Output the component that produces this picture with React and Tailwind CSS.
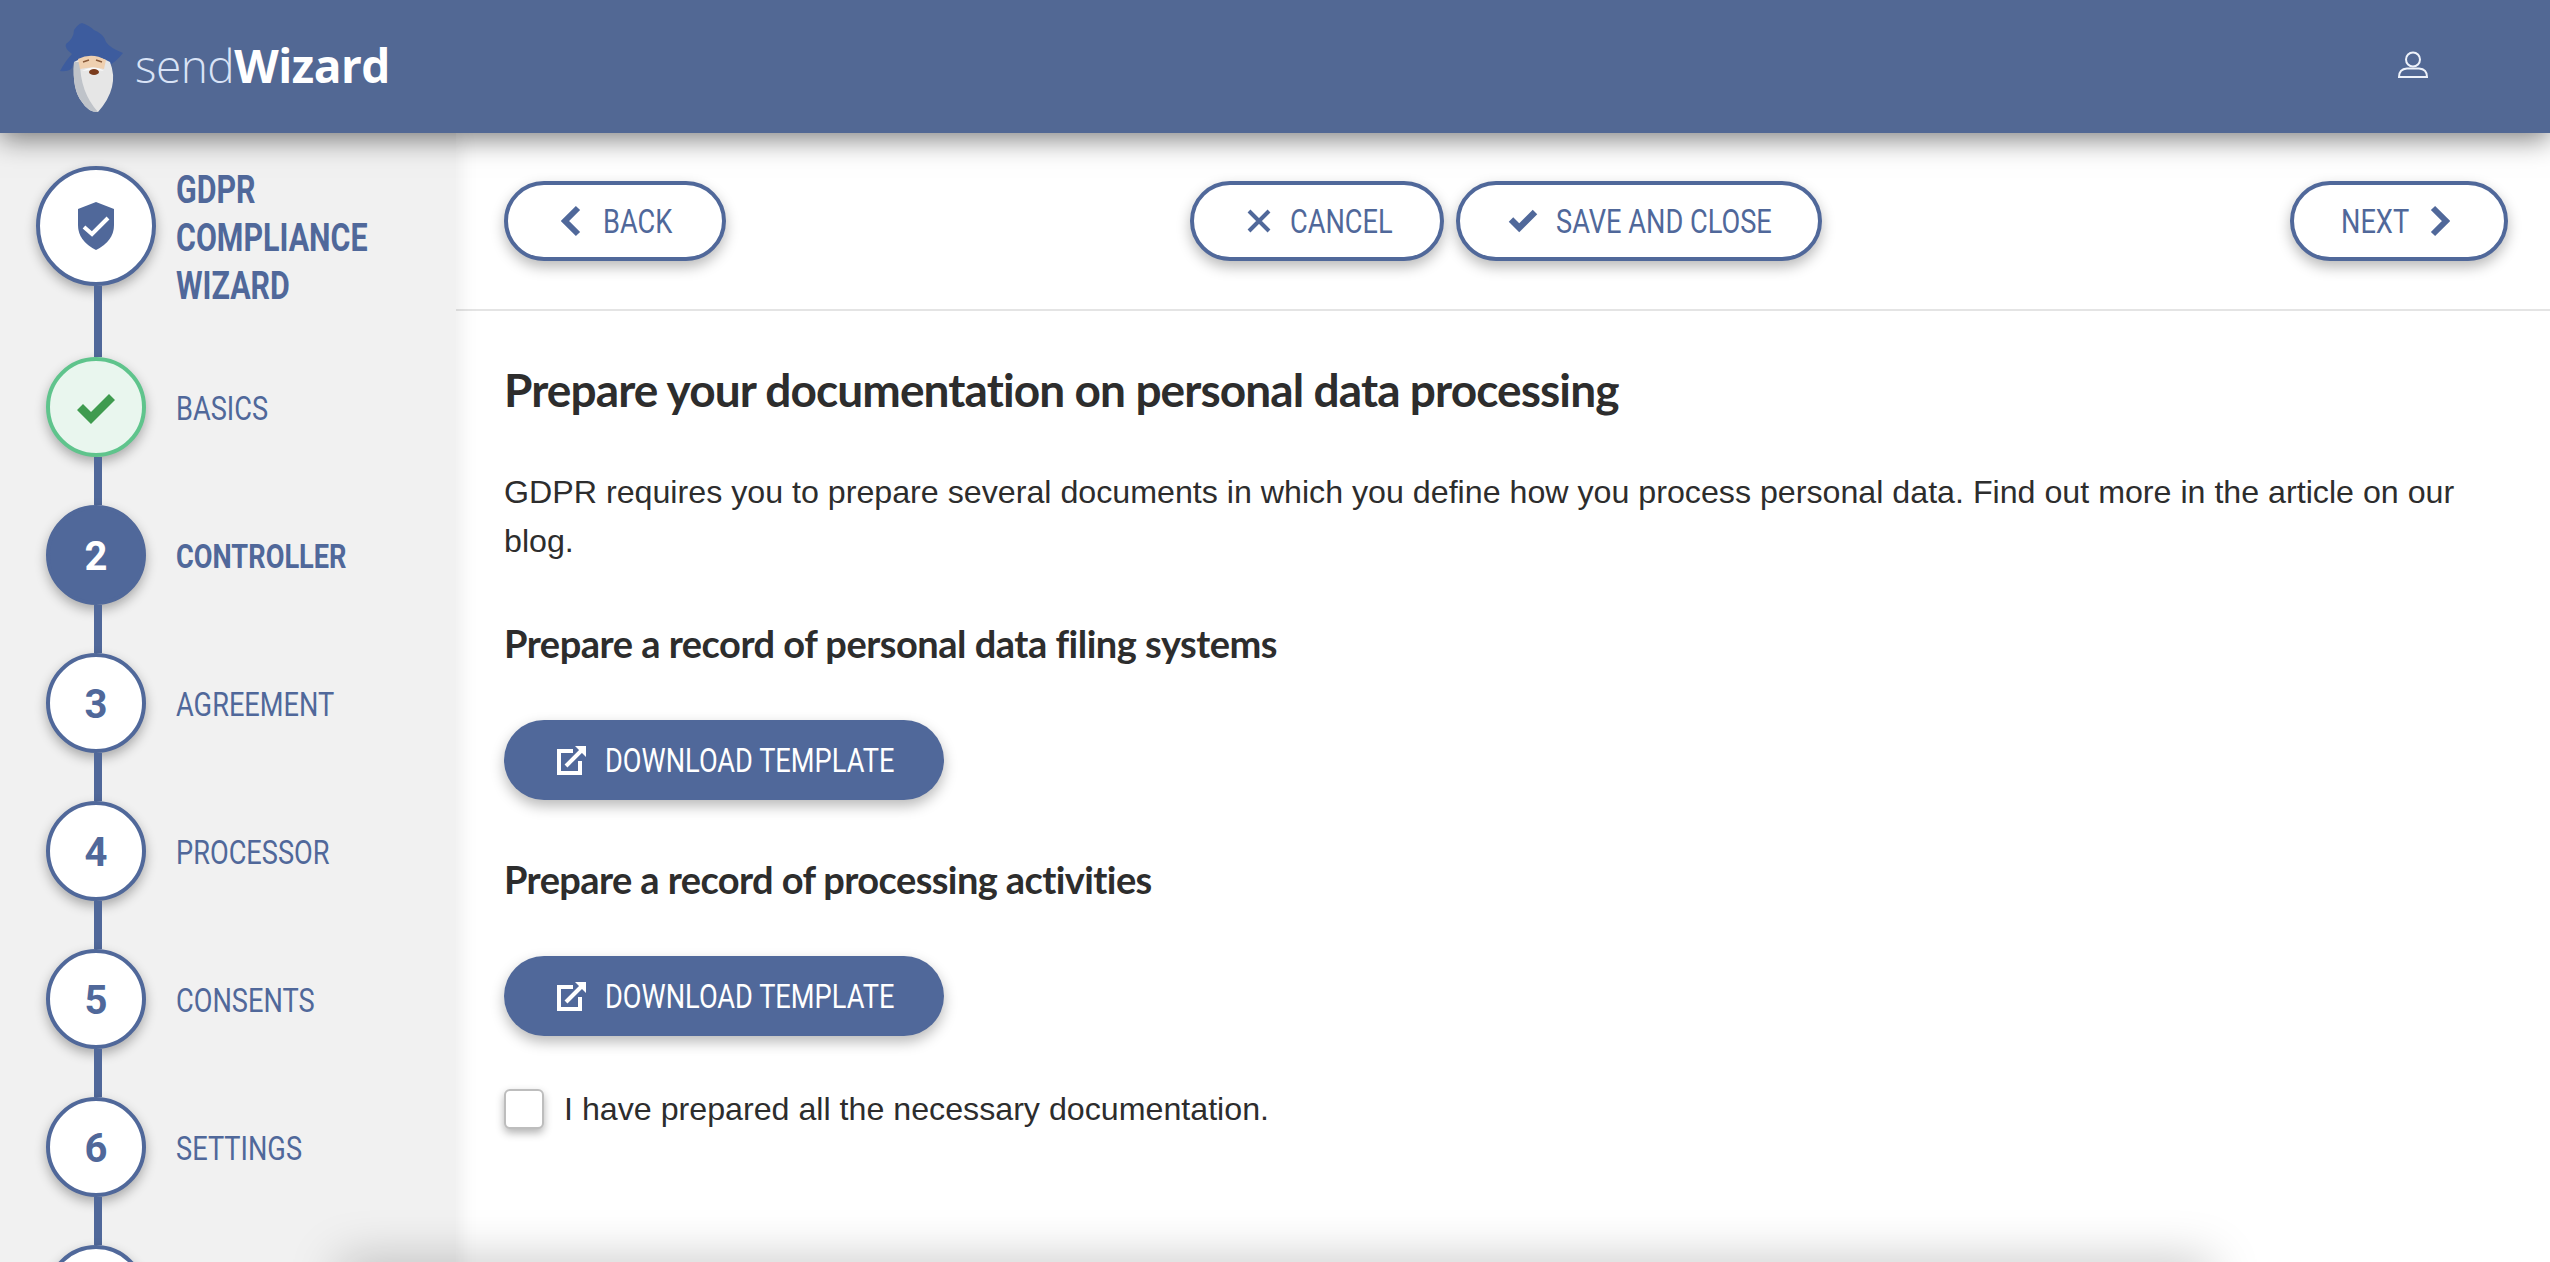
import React from "react";

const steps = [
  { label: "BASICS", state: "done" },
  { label: "CONTROLLER", num: 2, state: "active" },
  { label: "AGREEMENT", num: 3 },
  { label: "PROCESSOR", num: 4 },
  { label: "CONSENTS", num: 5 },
  { label: "SETTINGS", num: 6 },
  { label: "" },
];

const din = "font-['Roboto',sans-serif]";

const Wizard = () => (
  <svg width="63" height="90" viewBox="0 0 63 90" className="shrink-0">
    <path
      d="M22 1 Q30 4 34 8 Q44 12 46 20 Q50 26 63 31 Q56 40 48 44 Q30 34 14 40 L12 46 Q8 50 0 49 Q6 38 12 32 Q4 26 6 22 Q14 16 14 8 Q18 2 22 1Z"
      fill="#3d5c9e"
    />
    <path d="M14 40 Q32 30 50 40 Q60 65 38 90 Q28 90 22 80 Q12 68 14 40Z" fill="#e6e6e6" />
    <path d="M14 40 Q12 68 22 80 Q28 90 38 90 Q20 70 20 40Z" fill="#bfc3c9" />
    <path d="M18 37 Q32 30 46 38 L44 47 Q32 44 20 47Z" fill="#efd0b0" />
    <path d="M23 40 L29 38 M36 38 L42 40" stroke="#8a5a3a" strokeWidth="1.5" fill="none" />
    <path d="M22 49 Q34 42 44 49 Q34 47 22 49Z" fill="#fafafa" />
    <ellipse cx="34" cy="50" rx="5" ry="3" fill="#7a3b1c" />
  </svg>
);

const Shield = () => (
  <svg width="38" height="50" viewBox="0 0 38 50">
    <path d="M19 1 L37 8 V24 Q37 40 19 49 Q1 40 1 24 V8Z" fill="#50689a" />
    <path d="M7 26 L15 33 L31 17" fill="none" stroke="#fff" strokeWidth="4" />
  </svg>
);

const Check = ({ color, size = 40 }) => (
  <svg width={size} height={size * 0.8} viewBox="0 0 40 32" className="shrink-0">
    <path d="M1 17 L7 11 L15 19 L33 1 L39 7 L15 31Z" fill={color} />
  </svg>
);

const ChevronLeft = () => (
  <svg width="20" height="32" viewBox="0 0 20 32" className="shrink-0">
    <path d="M17 3 L4 16 L17 29" fill="none" stroke="#50689a" strokeWidth="6" />
  </svg>
);

const ChevronRight = () => (
  <svg width="20" height="32" viewBox="0 0 20 32" className="shrink-0">
    <path d="M3 3 L16 16 L3 29" fill="none" stroke="#50689a" strokeWidth="6" />
  </svg>
);

const Cross = () => (
  <svg width="26" height="26" viewBox="0 0 26 26" className="shrink-0">
    <path d="M3 3 L23 23 M23 3 L3 23" stroke="#50689a" strokeWidth="4" />
  </svg>
);

const ExternalLink = () => (
  <svg width="30" height="30" viewBox="0 0 30 30" className="shrink-0">
    <path d="M16 6 H2 V28 H23 V16" fill="none" stroke="#fff" strokeWidth="4" />
    <path d="M9 21 L25 5" stroke="#fff" strokeWidth="4" />
    <path d="M18 1 H29 V12Z" fill="#fff" />
  </svg>
);

const User = () => (
  <svg width="30" height="28" viewBox="0 0 30 28" className="-mt-1">
    <circle cx="15" cy="8.5" r="7" fill="none" stroke="#eef2fa" strokeWidth="2" />
    <path d="M1 26 Q1 18 9 17.5 H21 Q29 18 29 26Z" fill="none" stroke="#eef2fa" strokeWidth="2" />
  </svg>
);

// Roboto squeezed to the narrow DIN look of the original labels
const Narrow = ({ children, className = "" }) => (
  <span className={`inline-block origin-left scale-x-[0.8] whitespace-nowrap ${className}`}>{children}</span>
);

const OutlineButton = ({ children, className = "" }) => (
  <button
    className={`${din} flex h-20 items-center rounded-[40px] border-4 border-[#50689a] bg-white text-[34px] text-[#50689a] shadow-[0_6px_14px_rgba(0,0,0,0.28)] ${className}`}
  >
    {children}
  </button>
);

const DownloadButton = () => (
  <button
    className={`${din} flex h-20 w-[440px] items-center gap-[18px] rounded-[40px] bg-[#50689a] pl-[53px] text-[34px] text-white shadow-[0_6px_14px_rgba(0,0,0,0.28)]`}
  >
    <ExternalLink />
    <Narrow>DOWNLOAD TEMPLATE</Narrow>
  </button>
);

const Step = ({ step, first }) => {
  const done = step.state === "done";
  const active = step.state === "active";
  return (
    <div className="flex flex-col">
      <div className={`ml-[94px] w-2 bg-[#50689a] ${first ? "h-[71px]" : "h-12"}`} />
      <div className="flex items-center">
        <div
          className={`${din} ml-[46px] flex h-[100px] w-[100px] shrink-0 items-center justify-center rounded-full border-4 pt-[3px] text-[40px] font-bold shadow-[0_5px_12px_rgba(0,0,0,0.3)] ${
            done
              ? "border-[#5fc48c] bg-[#e9f6ee]"
              : active
              ? "border-[#50689a] bg-[#50689a] text-white"
              : "border-[#50689a] bg-white text-[#50689a]"
          }`}
        >
          {done ? <Check color="#3f9b4f" /> : step.num}
        </div>
        <span className={`${din} ml-[30px] pt-[2px] text-[34px] text-[#50689a] ${active ? "font-bold" : ""}`}>
          <Narrow>{step.label}</Narrow>
        </span>
      </div>
    </div>
  );
};

export default function App() {
  return (
    <div className="relative flex h-[1262px] w-[2550px] flex-col overflow-hidden bg-white">
      <header className="relative z-20 flex h-[133px] shrink-0 items-center justify-between bg-[#526894] pl-[60px] pr-[122px] shadow-[0_6px_26px_rgba(0,0,0,0.5)]">
        <div className="flex items-center gap-3">
          <Wizard />
          <span className="-mt-1 font-['Open_Sans',sans-serif] text-[46px] leading-none tracking-[-0.5px] text-[#d9e3f6]">
            <span className="font-light">send</span>
            <span className="font-bold text-white">Wizard</span>
          </span>
        </div>
        <User />
      </header>

      <div className="flex flex-1">
        <aside className="relative z-10 w-[456px] shrink-0 bg-[#f1f1f1] pt-[33px] shadow-[4px_0_18px_rgba(0,0,0,0.08)]">
          <div className="flex h-[120px] items-start">
            <div className="ml-9 flex h-[120px] w-[120px] shrink-0 items-center justify-center rounded-full border-4 border-[#50689a] bg-white shadow-[0_5px_12px_rgba(0,0,0,0.3)]">
              <Shield />
            </div>
            <h2 className={`${din} ml-5 text-[38px] font-bold leading-[48px] text-[#50689a]`}>
              <Narrow>GDPR</Narrow>
              <br />
              <Narrow>COMPLIANCE</Narrow>
              <br />
              <Narrow>WIZARD</Narrow>
            </h2>
          </div>
          {steps.map((step, i) => (
            <Step key={i} step={step} first={i === 0} />
          ))}
        </aside>

        <main className="flex-1">
          <div className="flex h-[178px] items-center justify-between border-b-2 border-[#e4e4e4] pl-[48px] pr-[42px]">
            <OutlineButton className="w-[222px] gap-[22px] pl-[53px]">
              <ChevronLeft />
              <Narrow>BACK</Narrow>
            </OutlineButton>
            <div className="-ml-1 flex gap-3">
              <OutlineButton className="w-[254px] gap-[18px] pl-[52px]">
                <Cross />
                <Narrow>CANCEL</Narrow>
              </OutlineButton>
              <OutlineButton className="w-[366px] gap-[18px] pl-12">
                <Check color="#50689a" size={30} />
                <Narrow>SAVE AND CLOSE</Narrow>
              </OutlineButton>
            </div>
            <OutlineButton className="w-[218px] gap-6 pl-[47px]">
              <Narrow className="w-[65px]">NEXT</Narrow>
              <ChevronRight />
            </OutlineButton>
          </div>

          <div className="pl-[48px] pr-[60px] pt-[49px] text-[#2d2d2d]">
            <h1 className="font-['Lato',sans-serif] text-[46px] font-bold leading-[60px] tracking-[-0.9px]">
              Prepare your documentation on personal data processing
            </h1>
            <p className="mt-12 font-['Liberation_Sans',sans-serif] text-[32.2px] leading-[49px]">
              GDPR requires you to prepare several documents in which you define how you process personal data. Find out more in the article on our blog.
            </p>
            <h3 className="mt-[52px] font-['Lato',sans-serif] text-[38px] font-bold leading-[50px] tracking-[-0.5px]">
              Prepare a record of personal data filing systems
            </h3>
            <div className="mt-[52px]">
              <DownloadButton />
            </div>
            <h3 className="mt-[54px] font-['Lato',sans-serif] text-[38px] font-bold leading-[50px] tracking-[-0.6px]">
              Prepare a record of processing activities
            </h3>
            <div className="mt-[52px]">
              <DownloadButton />
            </div>
            <label className="mt-[49px] flex items-center gap-5 font-['Liberation_Sans',sans-serif] text-[32.2px]">
              <span className="h-10 w-10 rounded-md border-2 border-[#bdbdbd] bg-white shadow-[0_4px_8px_rgba(0,0,0,0.3)]" />
              I have prepared all the necessary documentation.
            </label>
          </div>
        </main>
      </div>

      <div className="absolute left-[340px] right-[340px] top-[1262px] z-20 h-10 shadow-[0_0_50px_rgba(0,0,0,0.25)]" />
    </div>
  );
}
